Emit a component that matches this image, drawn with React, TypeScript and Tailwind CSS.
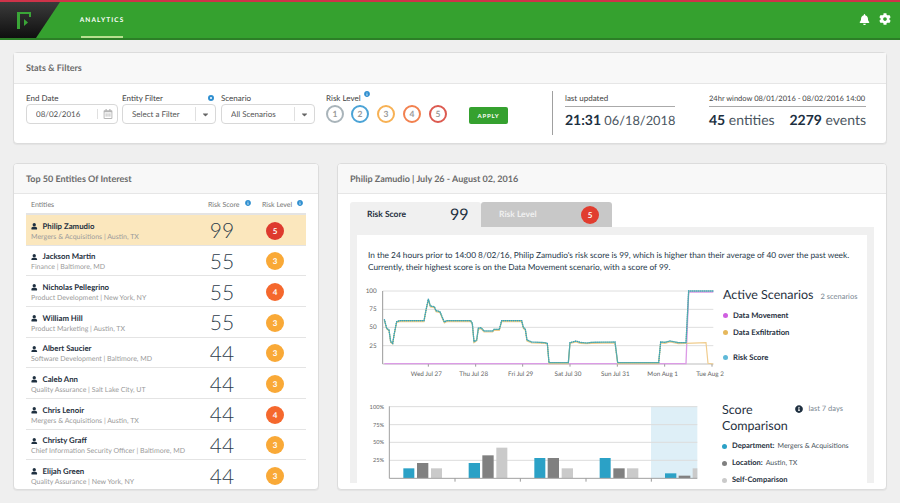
import { FaUser, FaBell, FaCog, FaInfoCircle, FaCaretDown, FaRegCalendarAlt } from 'react-icons/fa'

const people = [
  { name: 'Philip Zamudio', sub: 'Mergers & Acquisitions | Austin, TX', score: 99, level: 5 },
  { name: 'Jackson Martin', sub: 'Finance | Baltimore, MD', score: 55, level: 3 },
  { name: 'Nicholas Pellegrino', sub: 'Product Development | New York, NY', score: 55, level: 4 },
  { name: 'William Hill', sub: 'Product Marketing | Austin, TX', score: 55, level: 3 },
  { name: 'Albert Saucier', sub: 'Software Development | Baltimore, MD', score: 44, level: 3 },
  { name: 'Caleb Ann', sub: 'Quality Assurance | Salt Lake City, UT', score: 44, level: 3 },
  { name: 'Chris Lenoir', sub: 'Mergers & Acquisitions | Austin, TX', score: 44, level: 4 },
  { name: 'Christy Graff', sub: 'Chief Information Security Officer | Baltimore, MD', score: 44, level: 3 },
  { name: 'Elijah Green', sub: 'Quality Assurance | New York, NY', score: 44, level: 3 },
]

const levelBg: Record<number, string> = { 3: 'bg-[#f9a937]', 4: 'bg-[#f5682d]', 5: 'bg-[#de3a2e]' }

const riskCircles = [
  { n: 1, cls: 'border-[#a9b4ba] ml-0' },
  { n: 2, cls: 'border-[#4ba3d6] ml-[7px]' },
  { n: 3, cls: 'border-[#f7b154] ml-[8px]' },
  { n: 4, cls: 'border-[#f2814f] ml-[8px]' },
  { n: 5, cls: 'border-[#dc5a50] ml-[8px]' },
]

const linePts =
  '103,118 110,145 117,150 122,185 128,190 133,160 140,125 150,122 222,122 228,90 235,57 241,78 253,80 258,92 270,95 276,110 283,126 290,122 362,122 367,130 372,185 380,180 385,145 393,143 402,153 428,153 432,148 448,148 455,122 515,122 520,142 526,148 531,180 545,186 585,188 592,190 597,248 655,248 660,188 678,183 690,187 710,189 725,187 795,186 803,248 926,248 932,186 945,187 960,183 985,188 1008,188 1016,33 1090,33'

const exfilPts =
  '103,120 110,147 117,152 122,187 128,192 133,162 140,127 150,125 222,125 228,93 235,60 241,81 253,83 258,95 270,98 276,113 283,129 290,125 362,125 367,133 372,188 380,183 385,148 393,146 402,156 428,156 432,151 448,151 455,125 515,125 520,145 526,151 531,183 545,189 585,190 592,192 597,251 655,251 660,190 678,186 690,190 710,191 725,190 795,189 803,251 926,251 932,189 945,190 960,186 985,191 1008,190 1068,188 1074,250 1090,252'

const lineTicks = [
  { x: 235, label: 'Wed Jul 27' },
  { x: 377, label: 'Thu Jul 28' },
  { x: 518, label: 'Fri Jul 29' },
  { x: 660, label: 'Sat Jul 30' },
  { x: 802, label: 'Sun Jul 31' },
  { x: 944, label: 'Mon Aug 1' },
  { x: 1086, label: 'Tue Aug 2' },
]

const bars = [
  { x: 160, y: 238, w: 33, fill: '#2ba1c6' },
  { x: 201, y: 222, w: 34, fill: '#808080' },
  { x: 243, y: 238, w: 33, fill: '#cacaca' },
  { x: 356, y: 222, w: 34, fill: '#2ba1c6' },
  { x: 397, y: 199, w: 34, fill: '#808080' },
  { x: 439, y: 176, w: 33, fill: '#cacaca' },
  { x: 553, y: 207, w: 33, fill: '#2ba1c6' },
  { x: 593, y: 207, w: 34, fill: '#808080' },
  { x: 635, y: 238, w: 34, fill: '#cacaca' },
  { x: 749, y: 207, w: 33, fill: '#2ba1c6' },
  { x: 790, y: 238, w: 34, fill: '#808080' },
  { x: 831, y: 238, w: 34, fill: '#cacaca' },
  { x: 945, y: 253, w: 34, fill: '#2ba1c6' },
  { x: 986, y: 260, w: 35, fill: '#808080' },
  { x: 1028, y: 238, w: 14, fill: '#cacaca' },
]

function LineChart() {
  return (
    <svg viewBox="0 0 1110 330" className="h-[110px] w-[370px] shrink-0 overflow-visible">
      {[33, 88, 142, 197].map((y) => (
        <line key={y} x1="98" x2="1090" y1={y} y2={y} stroke="#dedede" strokeWidth="3" />
      ))}
      {[
        { y: 33, t: '100' },
        { y: 88, t: '75' },
        { y: 142, t: '50' },
        { y: 197, t: '25' },
      ].map((l) => (
        <text key={l.t} x="80" y={l.y + 6} textAnchor="end" fontSize="19" fill="#666">
          {l.t}
        </text>
      ))}
      <line x1="98" x2="98" y1="33" y2="252" stroke="#9a9a9a" strokeWidth="3" />
      <line x1="98" x2="1090" y1="252" y2="252" stroke="#bdbdbd" strokeWidth="3" />
      {lineTicks.map((t) => (
        <g key={t.label}>
          <line x1={t.x} x2={t.x} y1="252" y2="260" stroke="#9a9a9a" strokeWidth="3" />
          <text x={t.x - 6} y="287" textAnchor="middle" fontSize="19" fill="#666">
            {t.label}
          </text>
        </g>
      ))}
      <polyline points="103,251 1008,251 1016,36 1090,36" fill="none" stroke="#dc9be6" strokeWidth="4" />
      <polyline points={exfilPts} fill="none" stroke="#f0cc8c" strokeWidth="3.5" />
      <polyline points={linePts} fill="none" stroke="#7fb98f" strokeWidth="3.5" />
      <polyline points={linePts} fill="none" stroke="#2b9ccb" strokeWidth="4" strokeDasharray="3 3" />
    </svg>
  )
}

function BarChart() {
  return (
    <svg viewBox="0 0 1110 300" className="h-[100px] w-[370px] shrink-0">
      <rect x="903" y="52" width="139" height="216" fill="#deeff7" />
      {[53, 107, 160, 214].map((y) => (
        <line key={y} x1="118" x2="1042" y1={y} y2={y} stroke="#dcdcdc" strokeWidth="3" />
      ))}
      {[
        { y: 53, t: '100%' },
        { y: 107, t: '75%' },
        { y: 160, t: '50%' },
        { y: 214, t: '25%' },
      ].map((l) => (
        <text key={l.t} x="102" y={l.y + 6} textAnchor="end" fontSize="17" fill="#666">
          {l.t}
        </text>
      ))}
      <line x1="118" x2="118" y1="52" y2="268" stroke="#a0a0a0" strokeWidth="3" />
      {bars.map((b) => (
        <rect key={b.x} x={b.x} y={b.y} width={b.w} height={267 - b.y} fill={b.fill} />
      ))}
      <line x1="118" x2="1042" y1="268" y2="268" stroke="#a0a0a0" strokeWidth="3" />
      {[315, 511, 708, 904].map((x) => (
        <line key={x} x1={x} x2={x} y1="268" y2="278" stroke="#9a9a9a" strokeWidth="3" />
      ))}
    </svg>
  )
}

function Field({ w, text, children }: { w: string; text: string; children: React.ReactNode }) {
  return (
    <div className={`flex h-[20px] items-center rounded-[4px] border border-[#d8d8d8] bg-white pl-[9px] text-[8px] text-[#555] ${w}`}>
      <span className="flex-1 truncate">{text}</span>
      {children}
    </div>
  )
}

export default function App() {
  return (
    <div className="h-[503px] w-[900px] overflow-hidden bg-[#efefef] font-[Lato,sans-serif] text-[#1f3040] [text-rendering:geometricPrecision]">
      <nav className="flex h-[40px] items-stretch border-t-2 border-b-2 border-t-[#cf3349] border-b-[#2c7f27] bg-[#35a12f]">
        <svg viewBox="0 0 60 36" className="h-[36px] w-[60px] shrink-0">
          <defs>
            <linearGradient id="logoBg" x1="0" y1="0" x2="0" y2="1">
              <stop offset="0" stopColor="#3b3b3b" />
              <stop offset="1" stopColor="#0f0f0f" />
            </linearGradient>
          </defs>
          <polygon points="0,0 60,0 36,36 0,36" fill="url(#logoBg)" />
          <path d="M17 10h14v5h-2v-3H20v15h-3z" fill="#3aa537" />
          <polygon points="24,17 28,20.5 24,24" fill="#3aa537" />
        </svg>
        <div className="ml-[21px] flex w-[42px] flex-col items-center justify-between">
          <span className="mt-[14px] text-[6.5px] font-bold leading-[10px] tracking-[1.1px] text-white">ANALYTICS</span>
          <span className="h-[2px] w-full bg-[#b7e08f]" />
        </div>
        <div className="ml-auto mr-[9px] flex items-center gap-[9px] pb-[2px] text-white">
          <FaBell className="text-[11px]" />
          <FaCog className="text-[12px]" />
        </div>
      </nav>

      <main className="flex flex-col gap-[19px] px-[13px] pt-[12px]">
        <section className="h-[92px] rounded-[4px] border border-[#dcdcdc] bg-white shadow-[0_1px_1px_rgba(0,0,0,0.05)]">
          <header className="flex h-[31px] items-center border-b border-[#e6e6e6] bg-[#f8f8f8] pl-[12px] text-[9px] font-bold text-[#6b6b6b]">
            Stats &amp; Filters
          </header>
          <div className="flex items-start pl-[12px] pt-[8px]">
            <div className="w-[96px]">
              <div className="text-[8px] leading-[12px] text-[#444]">End Date</div>
              <Field w="w-[92px]" text="08/02/2016">
                <span className="mr-[4px] border-l border-[#e0e0e0] pl-[5px] text-[#b5b5b5]">
                  <FaRegCalendarAlt className="text-[10px]" />
                </span>
              </Field>
            </div>
            <div className="w-[99px]">
              <div className="relative w-[94px] text-[8px] leading-[12px] text-[#444]">
                Entity Filter
                <span className="absolute right-[2px] top-[3px] h-[6px] w-[6px] rounded-full border-2 border-[#2f8fd0]" />
              </div>
              <Field w="w-[94px]" text="Select a Filter">
                <span className="flex h-[14px] items-center border-l border-[#e0e0e0] px-[5px] text-[#666]">
                  <FaCaretDown className="text-[9px]" />
                </span>
              </Field>
            </div>
            <div className="w-[105px]">
              <div className="text-[8px] leading-[12px] text-[#444]">Scenario</div>
              <Field w="w-[94px]" text="All Scenarios">
                <span className="flex h-[14px] items-center border-l border-[#e0e0e0] px-[5px] text-[#666]">
                  <FaCaretDown className="text-[9px]" />
                </span>
              </Field>
            </div>
            <div className="w-[143px]">
              <div className="mb-[1px] flex gap-[3px] text-[8px] leading-[12px] text-[#444]">
                Risk Level
                <FaInfoCircle className="mt-[-1px] text-[6px] text-[#2f8fd0]" />
              </div>
              <div className="flex">
                {riskCircles.map((c) => (
                  <span
                    key={c.n}
                    className={`flex h-[18px] w-[18px] items-center justify-center rounded-full border-2 text-[8.5px] font-bold text-[#9a9a9a] ${c.cls}`}
                  >
                    {c.n}
                  </span>
                ))}
              </div>
            </div>
            <button className="mt-[15px] h-[17px] w-[39px] rounded-[2px] bg-[#35a12f] text-[6px] font-bold tracking-[0.8px] text-white">
              APPLY
            </button>
            <div className="ml-[44px] mr-[12px] mt-[-1px] h-[44px] w-px bg-[#a0a0a0]" />
            <div className="w-[110px]">
              <div className="border-b border-[#aaa] pb-[1px] text-[8px] leading-[13px] text-[#444]">last updated</div>
              <div className="mt-[3px] whitespace-nowrap text-[12.8px] leading-[20px] text-[#4a5560]">
                <b className="text-[14px] text-[#1c2f3f]">21:31</b> 06/18/2018
              </div>
            </div>
            <div className="ml-[34px] w-[157px]">
              <div className="whitespace-nowrap border-b border-[#aaa] pb-[1px] text-[7.5px] leading-[13px] text-[#444]">
                24hr window 08/01/2016 - 08/02/2016 14:00
              </div>
              <div className="mt-[3px] flex justify-between whitespace-nowrap text-[14px] leading-[20px] text-[#4a5560]">
                <span>
                  <b className="text-[#1c2f3f]">45</b> entities
                </span>
                <span>
                  <b className="text-[#1c2f3f]">2279</b> events
                </span>
              </div>
            </div>
          </div>
        </section>

        <div className="flex gap-[18px]">
          <section className="h-[327px] w-[306px] overflow-hidden rounded-[4px] border border-[#dcdcdc] bg-white shadow-[0_1px_1px_rgba(0,0,0,0.05)]">
            <header className="flex h-[30px] items-center border-b border-[#e6e6e6] bg-[#f8f8f8] pl-[12px] text-[9px] font-bold text-[#6b6b6b]">
              Top 50 Entities Of Interest
            </header>
            <div className="px-[12px]">
              <div className="flex h-[21px] items-center border-b-2 border-[#e4e4e4] pl-[5px] pt-[3px] text-[7px] text-[#777]">
                <span className="w-[177px]">Entities</span>
                <span className="flex w-[54px] gap-[5px] whitespace-nowrap">
                  Risk Score <FaInfoCircle className="text-[6px] text-[#2f8fd0]" />
                </span>
                <span className="flex gap-[5px] whitespace-nowrap">
                  Risk Level <FaInfoCircle className="text-[6px] text-[#2f8fd0]" />
                </span>
              </div>
              {people.map((p, i) => (
                <div
                  key={p.name}
                  className={`flex h-[30.67px] items-center border-b border-[#e4e4e4] pl-[5px] ${i === 0 ? 'bg-[#fbe7bd]' : ''}`}
                >
                  <div className="w-[170px] min-w-0 pt-[3px]">
                    <div className="flex items-center gap-[5px] text-[7.8px] font-bold leading-[11px] text-[#1f3040]">
                      <FaUser className="text-[6.5px]" />
                      {p.name}
                    </div>
                    <div className="whitespace-nowrap text-[7px] leading-[10px] text-[#9b9b9b]">{p.sub}</div>
                  </div>
                  <span className="mt-[2px] w-[42px] text-center text-[21px] font-light leading-none text-[#2c3b49]">{p.score}</span>
                  <span
                    className={`ml-[23px] mt-[2px] flex h-[18px] w-[18px] items-center justify-center rounded-full text-[8px] font-bold text-white ${levelBg[p.level]}`}
                  >
                    {p.level}
                  </span>
                </div>
              ))}
            </div>
          </section>

          <section className="h-[327px] w-[550px] overflow-hidden rounded-[4px] border border-[#dcdcdc] bg-white shadow-[0_1px_1px_rgba(0,0,0,0.05)]">
            <header className="flex h-[30px] items-center border-b border-[#e6e6e6] bg-[#f8f8f8] pl-[12px] text-[9px] font-bold text-[#6b6b6b]">
              Philip Zamudio | July 26 - August 02, 2016
            </header>
            <div className="px-[12px] pt-[8px]">
              <div className="flex h-[25px]">
                <div className="flex w-[131px] items-center rounded-t-[3px] bg-[#f0f0f0] pl-[17px]">
                  <span className="w-[83px] text-[8.5px] font-bold">Risk Score</span>
                  <span className="text-[16px] leading-none">99</span>
                </div>
                <div className="flex w-[131px] items-center rounded-t-[3px] bg-[#c8c8c8] pl-[18px]">
                  <span className="w-[82px] text-[8.5px] font-bold text-[#f0f0f0]">Risk Level</span>
                  <span className="flex h-[18px] w-[18px] items-center justify-center rounded-full bg-[#e13d30] text-[8px] font-bold text-white">
                    5
                  </span>
                </div>
              </div>
              <div className="h-[256px] bg-[#f0f0f0] px-[7px] pt-[8px]">
                <div className="h-[248px] bg-white pl-[11px] pt-[14px]">
                  <p className="whitespace-nowrap text-[8.3px] leading-[12px] text-[#26384a]">
                    In the 24 hours prior to 14:00 8/02/16, Philip Zamudio's risk score is 99, which is higher than their average of 40 over the past week.
                    <br />
                    Currently, their highest score is on the Data Movement scenario, with a score of 99.
                  </p>
                  <div className="ml-[-18px] mt-[7px] flex">
                    <LineChart />
                    <div className="pl-[3px] pt-[5px]">
                      <div className="flex items-baseline gap-[7px] whitespace-nowrap">
                        <span className="text-[12.5px] leading-[20px]">Active Scenarios</span>
                        <span className="text-[7.5px] text-[#7a8792]">2 scenarios</span>
                      </div>
                      <div className="mt-[4px] flex items-center gap-[5px] text-[7.7px] font-bold leading-[12px]">
                        <span className="h-[5px] w-[5px] rounded-full bg-[#cf5fe0]" />
                        Data Movement
                      </div>
                      <div className="mt-[5px] flex items-center gap-[5px] text-[7.7px] font-bold leading-[12px]">
                        <span className="h-[5px] w-[5px] rounded-full bg-[#e6b85c]" />
                        Data Exfiltration
                      </div>
                      <div className="mt-[13px] flex items-center gap-[5px] text-[7.7px] font-bold leading-[12px]">
                        <span className="h-[5px] w-[5px] rounded-full bg-[#5fb9d8]" />
                        Risk Score
                      </div>
                    </div>
                  </div>
                  <div className="ml-[-18px] mt-[-1px] flex">
                    <BarChart />
                    <div className="w-[140px] pl-[2px] pt-[13px]">
                      <div className="flex justify-between">
                        <span className="w-[70px] text-[12.5px] leading-[16px]">Score Comparison</span>
                        <span className="mr-[17px] mt-[1px] flex h-fit items-center gap-[5px] whitespace-nowrap text-[7.5px] text-[#7a8792]">
                          <FaInfoCircle className="text-[8px] text-[#1f3040]" />
                          last 7 days
                        </span>
                      </div>
                      <div className="mt-[6px] flex items-center gap-[3px] whitespace-nowrap text-[7.5px] leading-[12px]">
                        <span className="mr-[2px] h-[5px] w-[5px] shrink-0 rounded-full bg-[#2ba1c6]" />
                        <b>Department:</b> <span className="text-[7px] text-[#4a5560]">Mergers &amp; Acquisitions</span>
                      </div>
                      <div className="mt-[5px] flex items-center gap-[3px] whitespace-nowrap text-[7.5px] leading-[12px]">
                        <span className="mr-[2px] h-[5px] w-[5px] shrink-0 rounded-full bg-[#808080]" />
                        <b>Location:</b> <span className="text-[7px] text-[#4a5560]">Austin, TX</span>
                      </div>
                      <div className="mt-[5px] flex items-center gap-[5px] whitespace-nowrap text-[7.5px] font-bold leading-[12px]">
                        <span className="h-[5px] w-[5px] shrink-0 rounded-full bg-[#cacaca]" />
                        Self-Comparison
                      </div>
                    </div>
                  </div>
                </div>
              </div>
            </div>
          </section>
        </div>
      </main>
    </div>
  )
}
